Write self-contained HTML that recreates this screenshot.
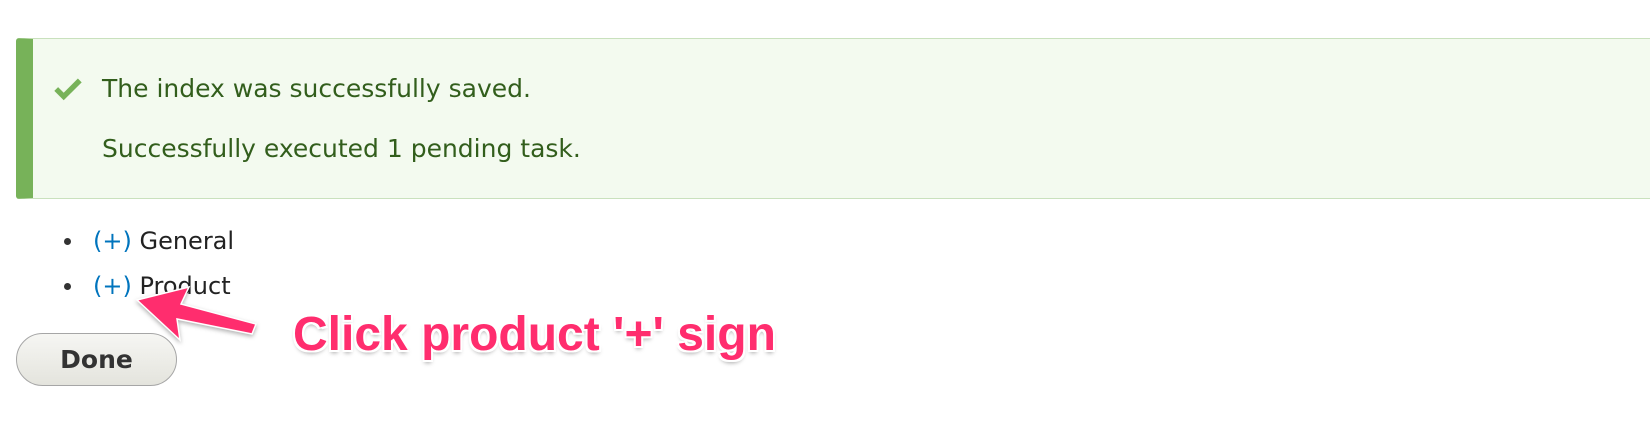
<!DOCTYPE html>
<html><head><style>
body{margin:0;width:1650px;height:432px;background:#fff;position:relative;overflow:hidden;font-family:"DejaVu Sans","Liberation Sans",sans-serif;}
.msg{position:absolute;left:16px;top:38px;width:1650px;height:161px;background:#f3faef;border:1px solid #c9e1bd;border-left:17px solid #77b259;border-radius:3px;box-sizing:border-box;}
.t{position:absolute;left:102px;font-size:25px;line-height:28px;color:#325e1c;}
.li{position:absolute;left:93px;font-size:24px;line-height:28px;color:#222;}
.li b{font-weight:normal;color:#0074bd;}
.dot{position:absolute;left:64px;width:7px;height:7px;border-radius:50%;background:#333;}
.btn{position:absolute;left:16px;top:333px;width:161px;height:53px;box-sizing:border-box;border:1px solid #a6a6a6;border-radius:27px;background:linear-gradient(#f6f6f3,#e4e4dd);font-weight:bold;font-size:25px;color:#333;text-align:center;line-height:51px;}
.ann{position:absolute;left:293px;top:307px;font-family:"Liberation Sans",sans-serif;font-weight:bold;font-size:48px;line-height:56px;color:#ff2d6e;text-shadow:-2px -2px 0 #fff,2px -2px 0 #fff,-2px 2px 0 #fff,2px 2px 0 #fff,0 3px 4px rgba(0,0,0,.35);}
</style></head><body>
<div class="msg"></div>
<svg style="position:absolute;left:53px;top:76px" width="30" height="26" viewBox="0 0 28 24"><path d="M3 12 L10 19 L25 4" fill="none" stroke="#77b259" stroke-width="5"/></svg>
<div class="t" style="top:75px">The index was successfully saved.</div>
<div class="t" style="top:135px">Successfully executed 1 pending task.</div>
<div class="dot" style="top:238px"></div>
<div class="li" style="top:227px"><b>(+)</b> General</div>
<div class="dot" style="top:283px"></div>
<div class="li" style="top:272px"><b>(+)</b> Product</div>
<div class="btn">Done</div>
<svg style="position:absolute;left:0;top:0" width="400" height="432"><path d="M137 300 L189 287 L181 304 L256 324 L252 334 L177 319 L180 340 Z" fill="#ff2d6e" stroke="#fff" stroke-width="1.5" style="filter:drop-shadow(0 2px 2px rgba(0,0,0,.3))"/></svg>
<div class="ann">Click product '+' sign</div>
</body></html>
